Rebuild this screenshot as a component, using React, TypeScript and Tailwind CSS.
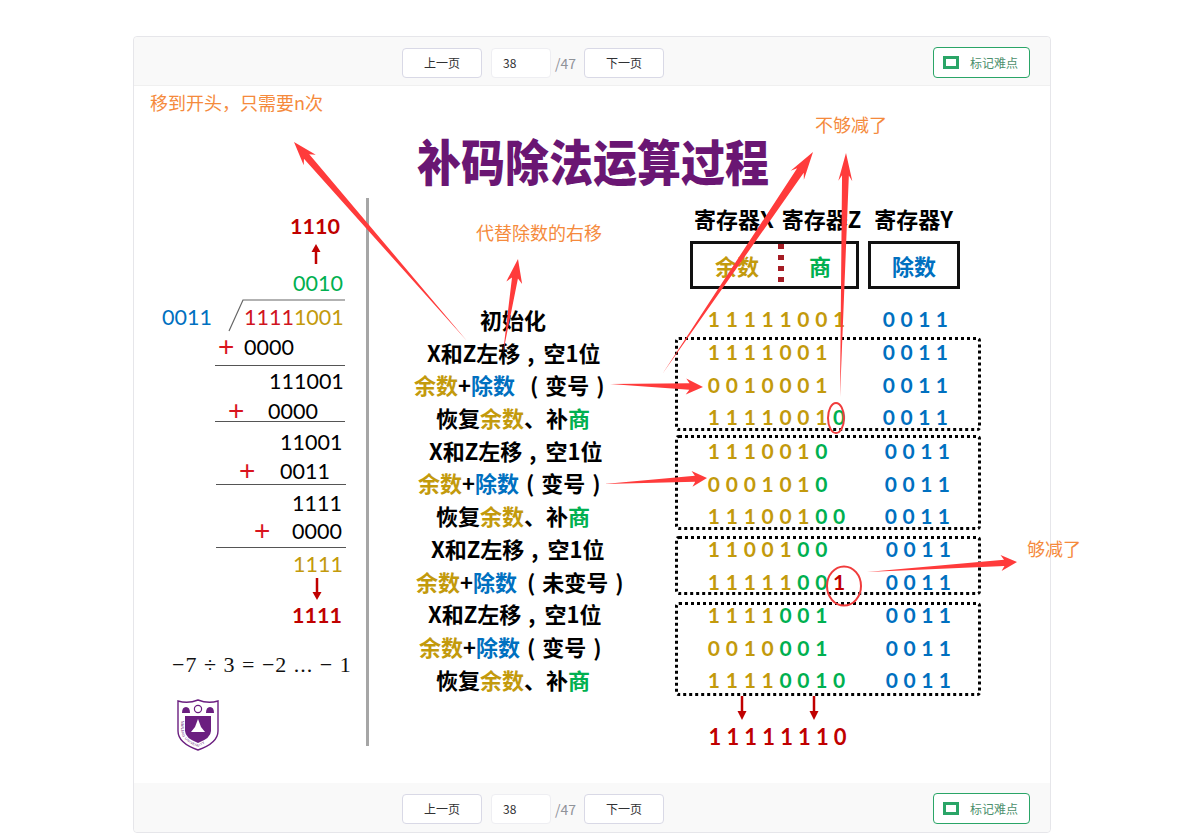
const GOLD = 'text-[#c39a0c]';
const GREEN = 'text-[#00b050]';
const RED = 'text-[#c00000]';
const BLUE = 'text-[#0070c0]';

const cjk = '[font-family:"Noto_Sans_CJK_SC",sans-serif]';

// tapered annotation arrow, thin at the tail and wide at the head
const wedge = (x1: number, y1: number, x2: number, y2: number, head = 24, wing = 8, neck = 3.5) => {
  const len = Math.hypot(x2 - x1, y2 - y1);
  const ux = (x2 - x1) / len;
  const uy = (y2 - y1) / len;
  const nx = -uy;
  const ny = ux;
  const bx = x2 - ux * head;
  const by = y2 - uy * head;
  const sx = x2 - ux * head * 0.8;
  const sy = y2 - uy * head * 0.8;
  return [
    [x1, y1],
    [sx + nx * neck, sy + ny * neck],
    [bx + nx * wing, by + ny * wing],
    [x2, y2],
    [bx - nx * wing, by - ny * wing],
    [sx - nx * neck, sy - ny * neck],
  ]
    .map((p) => p.join(','))
    .join(' ');
};

const Pager = () => (
  <div className="flex items-center">
    <button className="w-[80px] h-[30px] bg-white border border-[#d9d9e6] rounded-[4px] text-xs text-[#303133]">上一页</button>
    <div className="ml-[9px] w-[60px] h-[30px] bg-white border border-[#eeeef2] rounded-[4px] pl-[11px] text-xs leading-[28px] text-[#303133]">38</div>
    <span className="ml-[4px] w-[29px] text-sm text-[#909399]">/47</span>
    <button className="w-[80px] h-[30px] bg-white border border-[#d9d9e6] rounded-[4px] text-xs text-[#303133]">下一页</button>
  </div>
);

const MarkButton = () => (
  <button className="absolute right-[20px] top-[10px] w-[97px] h-[31px] bg-white border border-[#2aa567] rounded-[4px] flex items-center pl-[9px] gap-[11px] text-xs text-[#4c8f6c]">
    <span className="w-[16px] h-[13px] border-[3px] border-[#2aa567] bg-white" />
    标记难点
  </button>
);

const Bar = ({ className }: { className: string }) => (
  <div className={`relative h-[49px] flex-none bg-[#f9f9f9] pl-[268px] pt-[11px] ${className}`}>
    <Pager />
    <MarkButton />
  </div>
);

const Digits = ({ text, colors, className = 'w-[17.9px]' }: { text: string; colors: string; className?: string }) => (
  <div className="flex">
    {text.split('').map((d, i) => {
      const c = colors[i];
      const color = c === 'g' ? GREEN : c === 'r' ? RED : c === 'b' ? BLUE : GOLD;
      return (
        <span key={i} className={`text-center ${className} ${color}`}>
          {d}
        </span>
      );
    })}
  </div>
);

const RegisterRow = ({ x, colors, offset = '' }: { x: string; colors: string; offset?: string }) => (
  <div className="flex h-[32.8px] text-[21px] leading-[32px] font-bold font-['Lato',sans-serif]">
    <div className="w-[175px]">
      <Digits text={x} colors={colors} />
    </div>
    <div className={offset}>
      <Digits text="0011" colors="bbbb" className="w-[17.7px]" />
    </div>
  </div>
);

const Group = ({ className, inner, children }: { className: string; inner: string; children: React.ReactNode }) => (
  <div className={`w-[306px] border-[3px] border-dotted border-black rounded-[4px] ${className}`}>
    <div className={`ml-[27px] ${inner}`}>{children}</div>
  </div>
);

const Yu = () => <span className={GOLD}>余数</span>;
const Chu = () => <span className={BLUE}>除数</span>;
const Shang = () => <span className={GREEN}>商</span>;

const Restore = () => (
  <div className="h-[32.7px] pl-[22px]">
    恢复<Yu />、补<Shang />
  </div>
);

const Shift = ({ className }: { className: string }) => (
  <div className={`h-[32.7px] ${className}`}>
    X和Z左移<span className="ml-[7px] mr-[9px]">,</span>空1位
  </div>
);

const Add = ({ className, gap, label }: { className: string; gap: string; label: string }) => (
  <div className={`h-[32.7px] ${className}`}>
    <Yu />+<Chu />
    <span className={`${gap} mr-[7px]`}>(</span>
    {label}
    <span className="ml-[7px]">)</span>
  </div>
);

const Note = ({ className, children }: { className: string; children: string }) => (
  <div className={`absolute z-20 text-lg leading-[24px] whitespace-nowrap text-[#f58a3c] ${cjk} ${className}`}>{children}</div>
);

const Num = ({ className, children }: { className: string; children: React.ReactNode }) => (
  <div className={`h-[22px] text-[21.5px] leading-[22px] ${className}`}>{children}</div>
);

const PlusRow = ({ className, plus, value }: { className: string; plus: string; value: string }) => (
  <div className={`flex h-[22px] text-[21.5px] leading-[22px] text-black ${className}`}>
    <span className={`text-[28px] text-[#d9141e] font-['Liberation_Sans',sans-serif] ${plus}`}>+</span>
    {value}
  </div>
);

const Rule = ({ className }: { className: string }) => <div className={`ml-[81px] w-[130px] h-px flex-none bg-[#555] ${className}`} />;

const Logo = () => (
  <svg className="ml-[43px] mt-[23px]" width="42" height="52" viewBox="0 0 42 52">
    <path d="M1 2 Q11 5 21 1 Q31 5 41 2 V32 Q41 44 21 51 Q1 44 1 32 Z" fill="#fff" stroke="#6b1f80" strokeWidth="1.4" />
    <path d="M8 17 H34 V32 Q34 39 21 44 Q8 39 8 32 Z" fill="#6b1f80" />
    <path d="M21 20 L24 28 L28 33 H14 L18 28 Z" fill="#fff" />
    <circle cx="21" cy="10" r="3.6" fill="none" stroke="#6b1f80" strokeWidth="1.2" />
    <path d="M5 14 Q5 8 9 8 Q13 8 13 14 Z M29 14 Q29 8 33 8 Q37 8 37 14 Z" fill="#6b1f80" />
    <path id="nju-seal" d="M4 22 V32 Q5 42 21 48 Q37 42 38 22" fill="none" />
    <text className="font-['Liberation_Sans',sans-serif]" fontSize="3.4" fill="#6b1f80" letterSpacing="0.35">
      <textPath href="#nju-seal">NANJING UNIVERSITY</textPath>
    </text>
  </svg>
);

const Annotations = () => (
  <svg className="absolute inset-0 z-10" width="916" height="697" viewBox="134 86 916 697">
    <g fill="#ff3b3b">
      <polygon points={wedge(467, 341, 294, 142)} />
      <polygon points={wedge(503, 353, 518, 259, 24, 8, 3)} />
      <polygon points={wedge(663, 373, 813, 152, 28, 8, 4)} />
      <polygon points={wedge(840, 397, 846, 153, 28, 7, 3.4)} />
      <polygon points={wedge(610, 384, 703, 387, 17, 8, 3.2)} />
      <polygon points={wedge(604, 484, 707, 478, 15, 8, 3)} />
      <polygon points={wedge(867, 572, 1017, 562, 16, 8, 3.2)} />
    </g>
    <ellipse cx="836" cy="418" rx="8" ry="15" fill="none" stroke="#f03c3c" strokeWidth="2" />
    <ellipse cx="844" cy="586" rx="17" ry="19.5" fill="none" stroke="#f03c3c" strokeWidth="2" />
    <g fill="#c00000" stroke="#c00000">
      <line x1="316" y1="264" x2="316" y2="250" strokeWidth="2.5" />
      <polygon points="316,244 311.5,252 320.5,252" stroke="none" />
      <line x1="317" y1="578" x2="317" y2="593" strokeWidth="2.5" />
      <polygon points="317,600 312.5,592 321.5,592" stroke="none" />
      <line x1="742" y1="696" x2="742" y2="712" strokeWidth="2.5" />
      <polygon points="742,720 737.5,711 746.5,711" stroke="none" />
      <line x1="814" y1="696" x2="814" y2="712" strokeWidth="2.5" />
      <polygon points="814,720 809.5,711 818.5,711" stroke="none" />
    </g>
    <polyline points="229,331 243,300 345,300" fill="none" stroke="#666" strokeWidth="1.2" />
  </svg>
);

const Division = () => (
  <div className="w-[232px] flex-none flex flex-col pt-[17px] font-['Lato',sans-serif] whitespace-nowrap">
    <Num className={`pl-[156px] font-bold ${RED}`}>1110</Num>
    <Num className={`pl-[159px] mt-[35px] ${GREEN}`}>0010</Num>
    <Num className="flex pl-[28px] mt-[12px]">
      <span className={`w-[82px] ${BLUE}`}>0011</span>
      <span className="text-[#d0141e]">1111</span>
      <span className={GOLD}>1001</span>
    </Num>
    <PlusRow className="pl-[84px] mt-[8px]" plus="w-[26px]" value="0000" />
    <Rule className="mt-[7px]" />
    <Num className="pl-[135px] mt-[4px] text-black">111001</Num>
    <PlusRow className="pl-[94px] mt-[8px]" plus="w-[40px]" value="0000" />
    <Rule className="-mt-px" />
    <Num className="pl-[146px] mt-[9px] text-black">11001</Num>
    <PlusRow className="pl-[105px] mt-[7px]" plus="w-[41px]" value="0011" />
    <Rule className="mt-[2px] ml-[82px]" />
    <Num className="pl-[158px] mt-[7px] text-black">1111</Num>
    <PlusRow className="pl-[120px] mt-[6px]" plus="w-[38px]" value="0000" />
    <Rule className="mt-[5px] ml-[82px]" />
    <Num className={`pl-[159px] mt-[5px] ${GOLD}`}>1111</Num>
    <Num className={`pl-[158px] mt-[29px] font-bold ${RED}`}>1111</Num>
    <div className="pl-[38px] mt-[28px] h-[22px] text-[22px] leading-[22px] tracking-[1px] text-[#111] font-['Liberation_Serif',serif]">−7 ÷ 3 = −2 ... − 1</div>
    <Logo />
  </div>
);

const Steps = () => (
  <div className={`ml-[45px] w-[261px] flex-none pt-[105px] text-[22px] leading-[32px] font-bold text-black whitespace-nowrap ${cjk}`}>
    <div className="h-[32.7px] pl-[66px]">初始化</div>
    <Shift className="pl-[13px]" />
    <Add className="" gap="ml-[15px]" label="变号" />
    <Restore />
    <Shift className="pl-[15px]" />
    <Add className="pl-[4px]" gap="ml-[7px]" label="变号" />
    <Restore />
    <Shift className="pl-[17px]" />
    <Add className="pl-[2px]" gap="ml-[10px]" label="未变号" />
    <Shift className="pl-[14px]" />
    <Add className="pl-[5px]" gap="ml-[7px]" label="变号" />
    <Restore />
  </div>
);

const Registers = () => (
  <div className="flex-none flex flex-col">
    <div className={`flex pl-[19px] pt-[5px] h-[37px] text-[22px] leading-[30px] font-bold text-black whitespace-nowrap ${cjk}`}>
      <span>寄存器X</span>
      <span className="ml-[8px]">寄存器Z</span>
      <span className="ml-[13px]">寄存器Y</span>
    </div>
    <div className={`flex gap-[9px] ml-[15px] mt-[6px] text-[22px] font-bold ${cjk}`}>
      <div className="w-[169px] h-[48px] border-[3px] border-[#111] flex items-center">
        <span className={`ml-[22px] w-[63px] ${GOLD}`}>余数</span>
        <span className="w-[6px] h-[42px] bg-[repeating-linear-gradient(to_bottom,#a51c24_0,#a51c24_5px,transparent_5px,transparent_11px)]" />
        <span className={`ml-[25px] ${GREEN}`}>商</span>
      </div>
      <div className={`w-[92px] h-[48px] border-[3px] border-[#111] flex items-center justify-center ${BLUE}`}>除数</div>
    </div>
    <div className="ml-[30px] mt-[14px]">
      <RegisterRow x="11111001" colors="yyyyyyyy" />
    </div>
    <Group className="h-[94px] mt-[1px]" inner="-mt-[4px]">
      <RegisterRow x="1111001" colors="yyyyyyy" />
      <RegisterRow x="0010001" colors="yyyyyyy" />
      <RegisterRow x="11110010" colors="yyyyyyyg" />
    </Group>
    <Group className="h-[95px] mt-[4px]" inner="-mt-[3px]">
      <RegisterRow x="1110010" colors="yyyyyyg" offset="ml-[2px]" />
      <RegisterRow x="0001010" colors="yyyyyyg" offset="ml-[2px]" />
      <RegisterRow x="11100100" colors="yyyyyygg" offset="ml-[2px]" />
    </Group>
    <Group className="h-[59px] mt-[6px]" inner="-mt-[6px]">
      <RegisterRow x="1100100" colors="yyyyygg" offset="ml-[3px]" />
      <RegisterRow x="11111001" colors="yyyyyggr" offset="ml-[3px]" />
    </Group>
    <Group className="h-[94px] mt-[7px]" inner="-mt-[6px]">
      <RegisterRow x="1111001" colors="yyyyggg" offset="ml-[3px]" />
      <RegisterRow x="0010001" colors="yyyyggg" offset="ml-[3px]" />
      <RegisterRow x="11110010" colors="yyyygggg" offset="ml-[3px]" />
    </Group>
    <div className="ml-[31px] mt-[25px] text-[22px] leading-[32px] font-bold font-['Lato',sans-serif]">
      <Digits text="11111110" colors="rrrrrrrr" />
    </div>
  </div>
);

const Slide = () => (
  <div className="relative flex-1 bg-white">
    <Note className="left-[16px] top-[4px]">移到开头，只需要n次</Note>
    <Note className="left-[681px] top-[26px]">不够减了</Note>
    <Note className="left-[342px] top-[134px]">代替除数的右移</Note>
    <Note className="left-[893px] top-[450px]">够减了</Note>

    <div className="pl-[283px] pt-[42px] h-[112px]">
      <h1 className={`text-[44px] leading-[64px] font-black whitespace-nowrap scale-y-[1.12] origin-center w-fit text-[#6a1673] ${cjk}`}>补码除法运算过程</h1>
    </div>

    <div className="flex items-start h-[548px]">
      <Division />
      <div className="w-[3px] h-[548px] flex-none bg-[#a6a6a6]" />
      <Steps />
      <Registers />
    </div>

    <Annotations />
  </div>
);

export default function App() {
  return (
    <div className="w-[1185px] h-[836px] bg-white pt-[36px] pl-[133px] overflow-hidden font-['Noto_Sans_CJK_SC',sans-serif]">
      <div className="w-[918px] h-[797px] border border-[#e6e6ea] rounded-[4px] flex flex-col">
        <Bar className="border-b border-[#f0f0f0] rounded-t-[4px]" />
        <Slide />
        <Bar className="rounded-b-[4px]" />
      </div>
    </div>
  );
}
